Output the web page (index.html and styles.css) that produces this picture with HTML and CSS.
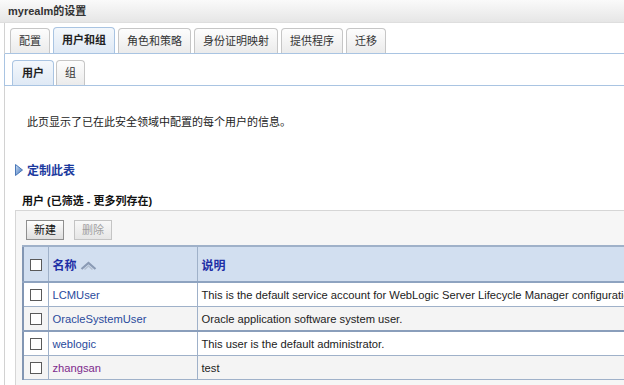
FILE: index.html
```html
<!DOCTYPE html>
<html lang="zh">
<head>
<meta charset="utf-8">
<title>myrealm的设置</title>
<link rel="stylesheet" href="styles.css">
</head>
<body>
<div class="titlebar">myrealm的设置</div>
<div class="main">
  <div class="tabs">
    <div class="tab">配置</div>
    <div class="tab active">用户和组</div>
    <div class="tab">角色和策略</div>
    <div class="tab">身份证明映射</div>
    <div class="tab">提供程序</div>
    <div class="tab">迁移</div>
  </div>
  <div class="subtabs">
    <div class="tab active">用户</div>
    <div class="tab">组</div>
  </div>
  <div class="content">
    <p class="intro">此页显示了已在此安全领域中配置的每个用户的信息。</p>
    <div class="customize">
      <svg class="tri" width="8" height="12" viewBox="0 0 8 12"><defs><linearGradient id="g" x1="0" y1="0" x2="1" y2="1"><stop offset="0" stop-color="#cfe0f5"/><stop offset="1" stop-color="#3a6fb8"/></linearGradient></defs><path d="M0.5 0.5 L7.5 6 L0.5 11.5 Z" fill="url(#g)" stroke="#4a78b8" stroke-width="1"/></svg>
      <span>定制此表</span>
    </div>
    <div class="tabletitle">用户 (已筛选 - 更多列存在)</div>
    <div class="panel">
      <div class="buttons">
        <span class="btn">新建</span>
        <span class="btn disabled">删除</span>
      </div>
      <table class="grid">
        <colgroup><col class="c1"><col class="c2"><col class="c3"></colgroup>
        <thead>
          <tr>
            <th class="chk"><span class="box"></span></th>
            <th>名称 <svg class="sort" width="17" height="10" viewBox="0 0 17 10"><path d="M1.5 8 L8.5 2 L15.5 8" fill="none" stroke="#8a9ab4" stroke-width="2.2"/><path d="M4.5 8.5 L8.5 5 L12.5 8.5" fill="none" stroke="#b4c0d2" stroke-width="1.6"/></svg></th>
            <th>说明</th>
          </tr>
        </thead>
        <tbody>
          <tr class="odd"><td class="chk"><span class="box"></span></td><td><a href="#">LCMUser</a></td><td>This is the default service account for WebLogic Server Lifecycle Manager configuration updates.</td></tr>
          <tr class="even sep"><td class="chk"><span class="box"></span></td><td><a href="#">OracleSystemUser</a></td><td>Oracle application software system user.</td></tr>
          <tr class="odd"><td class="chk"><span class="box"></span></td><td><a href="#">weblogic</a></td><td>This user is the default administrator.</td></tr>
          <tr class="even"><td class="chk"><span class="box"></span></td><td><a href="#" class="visited">zhangsan</a></td><td>test</td></tr>
        </tbody>
      </table>
    </div>
  </div>
</div>
</body>
</html>
```
FILE: styles.css
```css
html, body {
  margin: 0;
  padding: 0;
  background: #ffffff;
  overflow: hidden;
}
body {
  font-family: "Liberation Sans", "Noto Sans CJK SC", sans-serif;
  font-size: 11px;
  color: #222;
  width: 624px;
  height: 385px;
}
.titlebar {
  height: 22px;
  line-height: 22px;
  padding-left: 8px;
  font-weight: bold;
  color: #333;
  background: linear-gradient(#fafafa, #e6e6e6);
  border-bottom: 1px solid #dedede;
}
.main {
  margin-left: 4px;
  border-left: 1px solid #d2d2d2;
  height: 362px;
}
.tabs {
  display: flex;
  align-items: flex-end;
  gap: 3px;
  padding: 4px 0 0 5px;
  border-bottom: 1px solid #a9c4e2;
}
.tab {
  height: 24px;
  line-height: 24px;
  padding: 0 8px;
  border: 1px solid #c6c6c6;
  border-bottom: none;
  border-radius: 4px 4px 0 0;
  background: linear-gradient(#fdfdfd, #ebebeb);
  color: #333;
}
.tab.active {
  height: 25px;
  font-weight: bold;
  color: #222;
  border-color: #a9c4e2;
  background: linear-gradient(#f4f8fc, #dfe9f5);
}
.subtabs {
  display: flex;
  align-items: flex-end;
  gap: 2px;
  margin-left: -1px;
  padding: 6px 0 0 7px;
  border-left: 1px solid #a9c4e2;
  border-bottom: 1px solid #a9c4e2;
}
.subtabs .tab {
  height: 24px;
}
.subtabs .tab.active {
  padding: 0 9px;
}
.content {
  padding: 0;
}
.intro {
  margin: 29px 0 0 22px;
  line-height: 14px;
  color: #222;
}
.customize {
  display: flex;
  align-items: center;
  gap: 4px;
  margin: 32px 0 0 10px;
  color: #1c3a9e;
  font-weight: bold;
  font-size: 12px;
}
.tabletitle {
  margin: 16px 0 0 17px;
  font-weight: bold;
  color: #111;
  line-height: 14px;
}
.panel {
  margin: 2px 0 0 10px;
  width: 640px;
  background: #f6f6f6;
  border: 1px solid #d6d6d6;
  border-right: none;
  padding: 9px 0 0 6px;
  height: 170px;
}
.buttons {
  display: flex;
  gap: 10px;
  padding-left: 4px;
}
.btn {
  display: inline-block;
  height: 18px;
  line-height: 18px;
  padding: 0 7px;
  border: 1px solid #8f8f8f;
  background: linear-gradient(#fefefe, #dedede);
  color: #111;
  font-size: 11px;
}
.btn.disabled {
  color: #a0a0a0;
  border-color: #c4c4c4;
  background: linear-gradient(#f8f8f8, #e6e6e6);
}
.grid {
  margin-top: 5px;
  border-collapse: collapse;
  width: 700px;
  table-layout: fixed;
  border-left: 2px solid #8296b3;
  font-size: 11.2px;
}
.grid col.c1 { width: 25px; }
.grid col.c2 { width: 149px; }
.grid col.c3 { width: 526px; }
.grid th, .grid td {
  border: 1px solid #9fb1c9;
  padding: 0 0 0 4px;
  text-align: left;
  white-space: nowrap;
  overflow: hidden;
}
.grid thead th {
  height: 34px;
  background: #d2dff0;
  border-top: 2px solid #9fb1c9;
  border-bottom: 2px solid #8ea3c0;
  color: #1e2fa6;
  font-weight: bold;
  font-size: 12px;
}
.grid th .sort {
  vertical-align: -1px;
}
.grid td {
  height: 23px;
  color: #222;
}
.grid .chk {
  padding: 0;
  text-align: center;
}
.grid tr.odd td { background: #ffffff; }
.grid tr.even td { background: #f4f4f4; }
.grid tr.sep td { border-bottom: 2px solid #8a9ebb; }
.box {
  display: inline-block;
  width: 10px;
  height: 10px;
  border: 1px solid #5a5a5a;
  background: #fff;
  vertical-align: middle;
}
.grid a {
  color: #2a4a9c;
  text-decoration: none;
}
.grid a.visited {
  color: #7e2a8c;
}
```
